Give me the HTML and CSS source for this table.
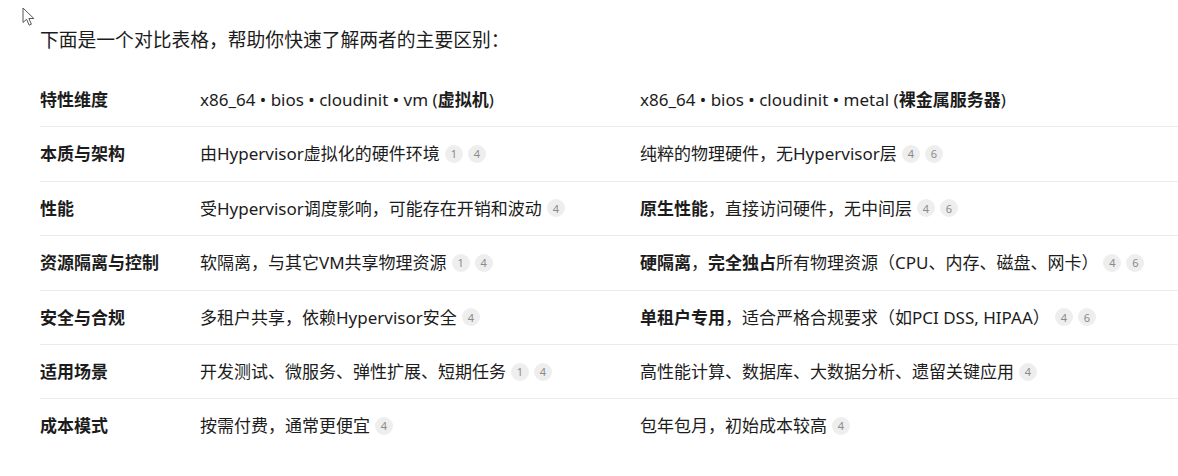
FILE: index.html
```html
<!DOCTYPE html>
<html lang="zh-CN">
<head>
    <meta charset="UTF-8">
    <meta name="viewport" content="width=device-width, initial-scale=1.0">
    <title>x86_64 vm vs metal</title>
    <link rel="stylesheet" href="styles.css">
</head>
<body>
    <svg class="cursor" width="14" height="20" viewBox="0 0 14 20">
        <path d="M1 1 L1 15.5 L4.6 12.3 L7.2 18.2 L9.4 17.2 L6.9 11.5 L11.8 11.5 Z" fill="#fff" stroke="#555" stroke-width="1" stroke-linejoin="round"/>
    </svg>

    <div class="answer">
        <p class="intro">下面是一个对比表格，帮助你快速了解两者的主要区别：</p>

        <table class="compare">
            <colgroup>
                <col class="col-key">
                <col class="col-vm">
                <col>
            </colgroup>
            <thead>
                <tr>
                    <th>特性维度</th>
                    <th class="plain">x86_64 • bios • cloudinit • vm (<b>虚拟机</b>)</th>
                    <th class="plain">x86_64 • bios • cloudinit • metal (<b>裸金属服务器</b>)</th>
                </tr>
            </thead>
            <tbody>
                <tr>
                    <td class="key">本质与架构</td>
                    <td>由Hypervisor虚拟化的硬件环境<span class="refs"><span class="ref">1</span><span class="ref">4</span></span></td>
                    <td>纯粹的物理硬件，无Hypervisor层<span class="refs"><span class="ref">4</span><span class="ref">6</span></span></td>
                </tr>
                <tr>
                    <td class="key">性能</td>
                    <td>受Hypervisor调度影响，可能存在开销和波动<span class="refs"><span class="ref">4</span></span></td>
                    <td><b>原生性能</b>，直接访问硬件，无中间层<span class="refs"><span class="ref">4</span><span class="ref">6</span></span></td>
                </tr>
                <tr>
                    <td class="key">资源隔离与控制</td>
                    <td>软隔离，与其它VM共享物理资源<span class="refs"><span class="ref">1</span><span class="ref">4</span></span></td>
                    <td><b>硬隔离</b>，<b>完全独占</b>所有物理资源（CPU、内存、磁盘、网卡）<span class="refs"><span class="ref">4</span><span class="ref">6</span></span></td>
                </tr>
                <tr>
                    <td class="key">安全与合规</td>
                    <td>多租户共享，依赖Hypervisor安全<span class="refs"><span class="ref">4</span></span></td>
                    <td><b>单租户专用</b>，适合严格合规要求（如PCI DSS, HIPAA）<span class="refs"><span class="ref">4</span><span class="ref">6</span></span></td>
                </tr>
                <tr>
                    <td class="key">适用场景</td>
                    <td>开发测试、微服务、弹性扩展、短期任务<span class="refs"><span class="ref">1</span><span class="ref">4</span></span></td>
                    <td>高性能计算、数据库、大数据分析、遗留关键应用<span class="refs"><span class="ref">4</span></span></td>
                </tr>
                <tr>
                    <td class="key">成本模式</td>
                    <td>按需付费，通常更便宜<span class="refs"><span class="ref">4</span></span></td>
                    <td>包年包月，初始成本较高<span class="refs"><span class="ref">4</span></span></td>
                </tr>
            </tbody>
        </table>
    </div>
</body>
</html>
```

FILE: styles.css
```css
body {
    margin: 0;
    background-color: #fff;
    color: #1c1c1c;
    font-family: "Noto Sans", "Noto Sans CJK SC", sans-serif;
    overflow: hidden;
}
.cursor {
    position: absolute;
    left: 22px;
    top: 7px;
}
.answer {
    padding: 26px 0 0 40px;
}
.intro {
    margin: 0 0 19px;
    font-size: 18.8px;
    line-height: 28px;
}
.compare {
    width: 100%;
    border-collapse: collapse;
    table-layout: fixed;
    font-size: 17px;
}
.col-key {
    width: 160px;
}
.col-vm {
    width: 440px;
}
.compare th,
.compare td {
    text-align: left;
    padding: 14px 0 13px;
    line-height: 26.4px;
    white-space: nowrap;
    vertical-align: middle;
}
.compare th {
    font-weight: 700;
}
.compare th.plain {
    font-weight: 400;
}
.compare tr {
    border-bottom: 1px solid #ebebeb;
}
.compare tbody tr:last-child {
    border-bottom: none;
}
.compare b,
.key {
    font-weight: 700;
}
.refs {
    display: inline-flex;
    gap: 5px;
    margin-left: 5px;
    vertical-align: 2px;
}
.ref {
    display: inline-flex;
    align-items: center;
    justify-content: center;
    width: 18px;
    height: 18px;
    border-radius: 50%;
    background-color: #eeeeee;
    color: #8a8a8a;
    font-size: 11px;
    font-weight: 400;
    line-height: 1;
}
```
